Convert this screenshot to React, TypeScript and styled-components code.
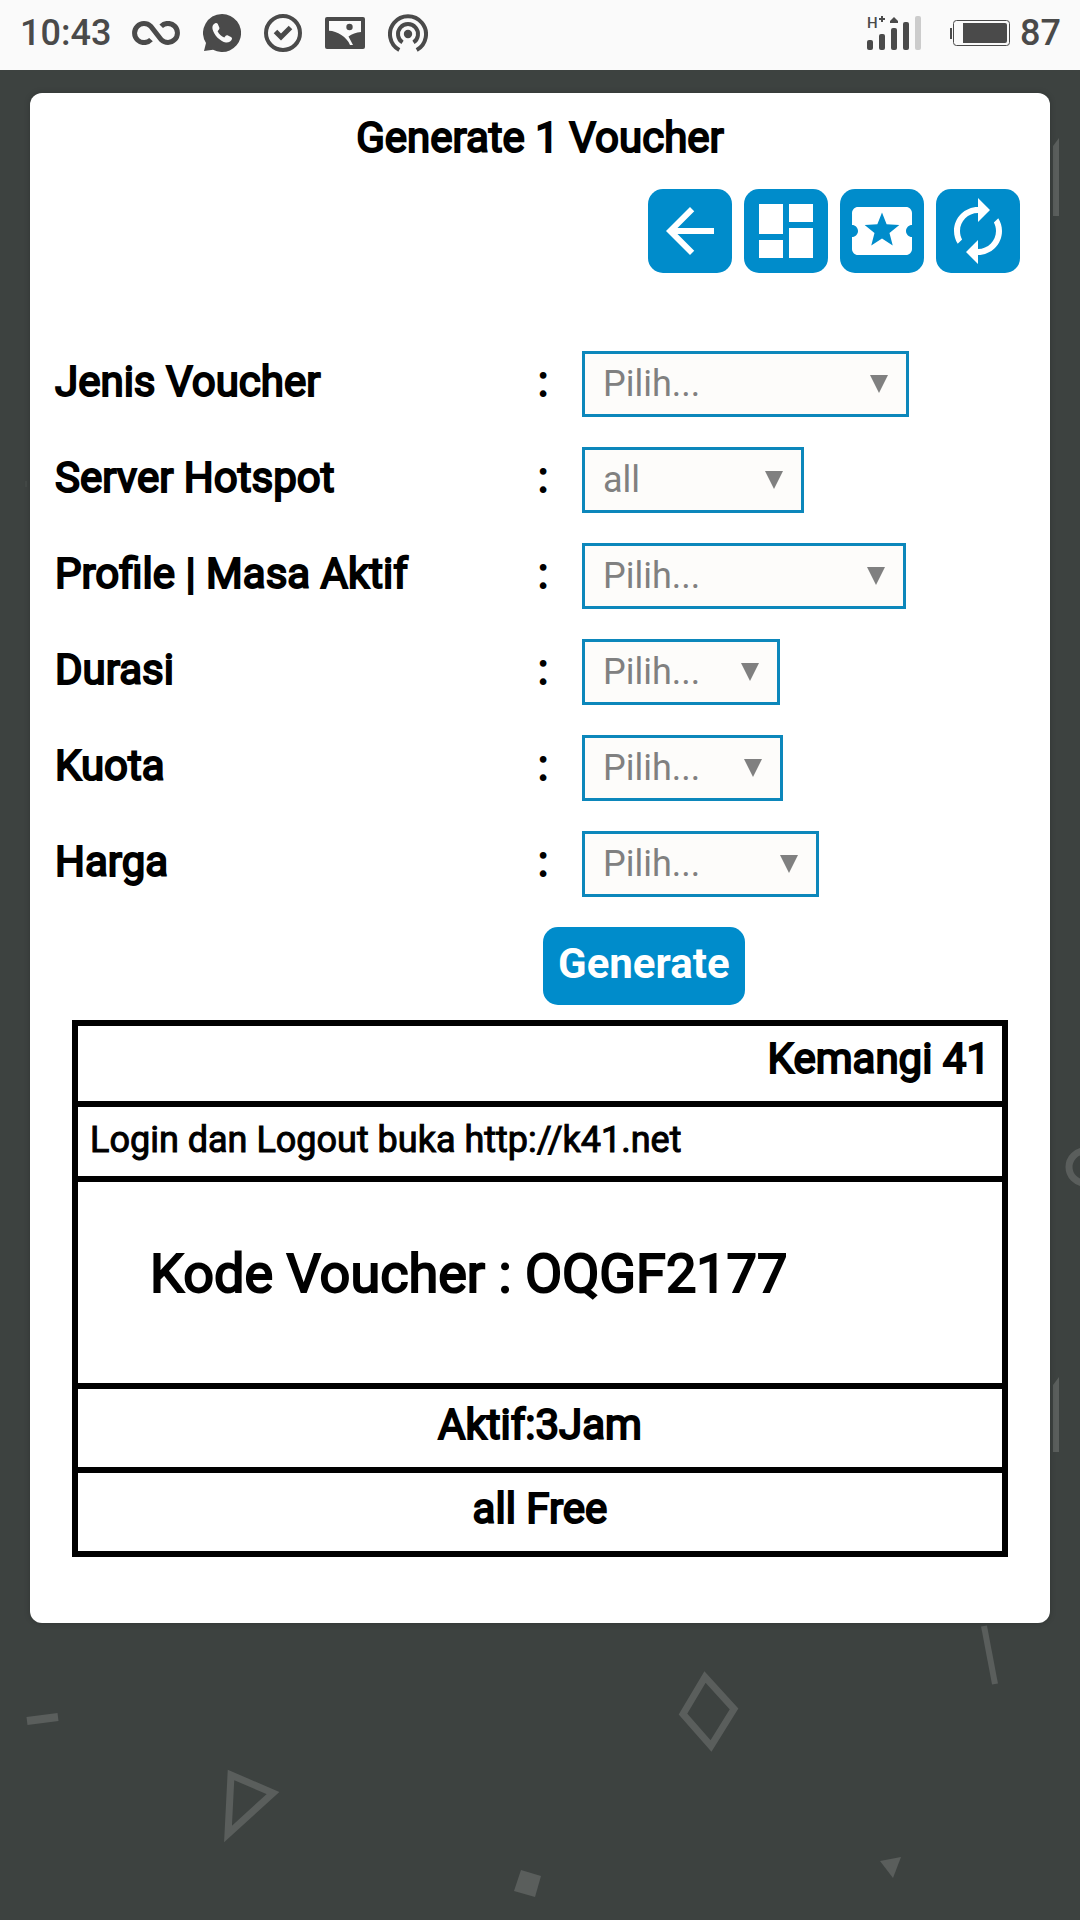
import React from "react";
import styled, { createGlobalStyle } from "styled-components";

const ink = "#4a4a4a";
const blue = "#008ccb";

const GlobalStyle = createGlobalStyle`
  *, *::before, *::after { box-sizing: border-box; }
  body {
    margin: 0;
    background: #3d4240;
    color: #000;
    font-family: Roboto, "Liberation Sans", sans-serif;
  }
`;

const Page = styled.div`
  position: relative;
  min-height: 100vh;
  overflow: hidden;
`;

const Backdrop = styled.svg`
  position: absolute;
  top: 0;
  left: 0;
  width: 1080px;
  height: 1920px;
`;

const StatusBar = styled.header`
  position: relative;
  display: flex;
  align-items: center;
  justify-content: space-between;
  height: 70px;
  padding: 0 19px 4px 20px;
  background: #fafafa;
  color: ${ink};
  font-size: 36px;
  font-weight: 500;
  line-height: 42px;
`;

const StatusGroup = styled.div<{ $gap: number }>`
  display: flex;
  align-items: center;
  gap: ${(p) => p.$gap}px;
`;

const Glyph = styled.svg`
  display: block;
  flex: none;
`;

const Card = styled.main`
  position: relative;
  margin: 23px 30px 0;
  padding: 21px 24px 66px;
  border-radius: 12px;
  background: #fff;
  box-shadow: 0 0 6px rgba(0, 0, 0, 0.2);
  font-size: 42px;
  line-height: 48px;
`;

const Title = styled.h1`
  margin: 0 0 27px;
  font-size: 42px;
  font-weight: 400;
  text-align: center;
  -webkit-text-stroke: 2px #000;
`;

const Toolbar = styled.nav`
  display: flex;
  justify-content: flex-end;
  gap: 12px;
  padding-right: 6px;
  margin-bottom: 63px;
`;

const ToolButton = styled.button`
  display: grid;
  place-items: center;
  width: 84px;
  height: 84px;
  padding: 0;
  border: 0;
  border-radius: 15px;
  background: ${blue};
  color: #fff;
  cursor: pointer;
`;

const Row = styled.div`
  display: grid;
  grid-template-columns: 483fr 45fr 444fr;
  align-items: baseline;
  padding: 15px 0;
`;

const Label = styled.label`
  padding-left: 1px;
  -webkit-text-stroke: 2px #000;
`;

const Colon = styled.span`
  padding-left: 1px;
  -webkit-text-stroke: 2px #000;
`;

const SelectBox = styled.div<{ $width: number }>`
  position: relative;
  width: ${(p) => p.$width}px;
  max-width: 100%;
`;

const Select = styled.select`
  display: block;
  appearance: none;
  width: 100%;
  height: 66px;
  padding: 0 48px 0 18px;
  border: 3px solid #0c87bb;
  border-radius: 0;
  background: #fdfcfa;
  color: #808080;
  font: 36px/42px Roboto, "Liberation Sans", sans-serif;
`;

const Caret = styled.svg`
  position: absolute;
  top: 24px;
  right: 21px;
  pointer-events: none;
`;

const Actions = styled.div`
  padding: 15px 0 15px calc(50% + 3px);
`;

const GenerateButton = styled.button`
  display: block;
  height: 78px;
  padding: 0 15px 4px;
  border: 0;
  border-radius: 15px;
  background: ${blue};
  color: #fff;
  font: bold 42px/48px Roboto, "Liberation Sans", sans-serif;
  cursor: pointer;
`;

const Voucher = styled.section`
  margin: 0 18px;
  border: 6px solid #000;
  border-bottom: 0;
`;

const VoucherLine = styled.p<{ $align?: string; $size?: number; $line?: number; $pad: string }>`
  margin: 0;
  padding: ${(p) => p.$pad};
  border-bottom: 6px solid #000;
  font-size: ${(p) => p.$size ?? 42}px;
  line-height: ${(p) => p.$line ?? 48}px;
  text-align: ${(p) => p.$align ?? "center"};
  -webkit-text-stroke: ${(p) => (p.$size === 36 ? 1 : 2)}px #000;
`;

const tools = [
  { name: "Kembali", d: "M20 11H7.83l5.59-5.59L12 4l-8 8 8 8 1.41-1.41L7.83 13H20v-2z" },
  { name: "Dashboard", d: "M3 13h8V3H3v10zm0 8h8v-6H3v6zm10 0h8V11h-8v10zm0-18v6h8V3h-8z" },
  {
    name: "Voucher",
    d: "M20 12c0-1.1.9-2 2-2V6c0-1.1-.9-2-2-2H4c-1.1 0-1.99.9-1.99 2v4c1.1 0 1.99.9 1.99 2s-.89 2-2 2v4c0 1.1.9 2 2 2h16c1.1 0 2-.9 2-2v-4c-1.1 0-2-.9-2-2zm-4.42 4.8L12 14.5l-3.58 2.3 1.08-4.12-3.29-2.69 4.24-.25L12 5.8l1.54 3.95 4.24.25-3.29 2.69 1.09 4.11z",
  },
  {
    name: "Muat ulang",
    d: "M12 6v3l4-4-4-4v3c-4.42 0-8 3.58-8 8 0 1.57.46 3.03 1.24 4.26L6.7 14.8c-.45-.83-.7-1.79-.7-2.8 0-3.31 2.69-6 6-6zm6.76 1.74L17.3 9.2c.44.84.7 1.79.7 2.8 0 3.31-2.69 6-6 6v-3l-4 4 4 4v-3c4.42 0 8-3.58 8-8 0-1.57-.46-3.03-1.24-4.26z",
  },
];

const fields = [
  { id: "jenis", label: "Jenis Voucher", value: "Pilih...", width: 327 },
  { id: "server", label: "Server Hotspot", value: "all", width: 222 },
  { id: "profile", label: "Profile | Masa Aktif", value: "Pilih...", width: 324 },
  { id: "durasi", label: "Durasi", value: "Pilih...", width: 198 },
  { id: "kuota", label: "Kuota", value: "Pilih...", width: 201 },
  { id: "harga", label: "Harga", value: "Pilih...", width: 237 },
];

function Shapes() {
  return (
    <Backdrop viewBox="0 0 1080 1920" fill="none" stroke="#5a5e5c" strokeWidth="7" aria-hidden="true">
      <path d="M1053 146L1059 138V216H1053Z" fill="#5a5e5c" stroke="none" />
      <path d="M1053 1385L1059 1377V1452H1053Z" fill="#5a5e5c" stroke="none" />
      <circle cx="1085" cy="1167" r="16" />
      <path d="M26 481V487" stroke="#4c504e" strokeWidth="1" />
      <path d="M27 1721L58 1717" strokeWidth="8" />
      <path d="M231 1775L273 1793L228 1834Z" />
      <path d="M521 1870L541 1876L535 1897L514 1891Z" fill="#5a5e5c" stroke="none" />
      <path d="M705 1677L734 1709L711 1746L683 1714Z" />
      <path d="M984 1626L995 1684" strokeWidth="6" />
      <path d="M880 1861L901 1857L893 1878Z" fill="#5a5e5c" stroke="none" />
    </Backdrop>
  );
}

function NotificationIcons() {
  return (
    <StatusGroup $gap={23}>
      <Glyph width="48" height="24" viewBox="0 0 48 24" fill="none" stroke={ink} strokeWidth="5">
        <path d="M19 18.6A9.5 9.5 0 1 1 18.7 5.3L29.3 18.7A9.5 9.5 0 1 0 29.2 5.2" />
      </Glyph>
      <Glyph width="38" height="38" viewBox="0 0 38 38">
        <path d="M19 0a19 19 0 1 1-9 35.7L1 37L3 29A19 19 0 0 1 19 0z" fill={ink} />
        <path
          d="M12.7 9C10 10 9 12 9.5 15C11 21 17 27.5 23 28.5C26 28.7 28.6 27 29 25C29 24 28.8 23.5 28 23L24.5 21.3C23.8 21 23.2 21.2 22.7 21.8L21.3 23.5C18.5 22.5 15.8 19.8 14.6 17.2L16 15.5C16.5 14.8 16.6 14.2 16.3 13.5L14.8 10C14.4 9 13.5 9 12.7 9z"
          fill="#fafafa"
        />
      </Glyph>
      <Glyph width="38" height="38" viewBox="0 0 38 38" fill="none" stroke={ink} strokeWidth="4">
        <circle cx="19" cy="19" r="17" />
        <path d="M11.5 17.5L17 23L26.5 13.5" strokeWidth="5" />
      </Glyph>
      <Glyph width="40" height="32" viewBox="0 0 40 32">
        <rect width="40" height="32" rx="2" fill={ink} />
        <path d="M4 4H36V15C31 15.5 27 17 23.5 19.5L28 28H25C22 20 12 14 4 13.8Z" fill="#fafafa" />
        <circle cx="24.5" cy="10" r="3.2" fill={ink} />
      </Glyph>
      <Glyph width="40" height="38" viewBox="0 0 40 38" fill="none" stroke={ink} strokeWidth="4">
        <path d="M11.3 36A18 18 0 1 1 28.7 36" />
        <path d="M14.5 28.4A10 10 0 1 1 25.5 28.4" />
        <circle cx="20" cy="20" r="4.2" fill={ink} stroke="none" />
      </Glyph>
    </StatusGroup>
  );
}

function SignalIcon() {
  return (
    <Glyph width="54" height="38" viewBox="0 -2 54 38" fill={ink}>
      <text x="0" y="12" fontSize="15">H</text>
      <path d="M12 2h2V0h2v2h2v2h-2v2h-2V4h-2z" />
      <path d="M23 7V5L27 1L31 5V7z" />
      <rect x="0" y="24" width="6" height="10" rx="2" />
      <rect x="12" y="18" width="6" height="16" rx="2" />
      <rect x="24" y="12" width="6" height="22" rx="2" />
      <rect x="36" y="6" width="6" height="28" rx="2" />
      <rect x="48" y="0" width="6" height="34" rx="2" fill="#cccccc" />
    </Glyph>
  );
}

function BatteryIcon() {
  return (
    <Glyph width="60" height="26" viewBox="0 0 60 26" fill={ink}>
      <rect x="0" y="8" width="2" height="11" />
      <rect x="3.5" y="0.5" width="56" height="25" rx="3" fill="none" stroke={ink} />
      <path d="M13 3H55a2 2 0 0 1 2 2V21a2 2 0 0 1-2 2H13z" />
    </Glyph>
  );
}

export default function App() {
  return (
    <Page>
      <GlobalStyle />
      <Shapes />
      <StatusBar>
        <StatusGroup $gap={21}>
          <time>10:43</time>
          <NotificationIcons />
        </StatusGroup>
        <StatusGroup $gap={29}>
          <SignalIcon />
          <StatusGroup $gap={10}>
            <BatteryIcon />
            <span>87</span>
          </StatusGroup>
        </StatusGroup>
      </StatusBar>
      <Card>
        <Title>Generate 1 Voucher</Title>
        <Toolbar>
          {tools.map((tool) => (
            <ToolButton key={tool.name} type="button" aria-label={tool.name}>
              <Glyph width="72" height="72" viewBox="0 0 24 24" fill="currentColor">
                <path d={tool.d} />
              </Glyph>
            </ToolButton>
          ))}
        </Toolbar>
        <form onSubmit={(e) => e.preventDefault()}>
          {fields.map((field) => (
            <Row key={field.id}>
              <Label htmlFor={field.id}>{field.label}</Label>
              <Colon>:</Colon>
              <SelectBox $width={field.width}>
                <Select id={field.id}>
                  <option>{field.value}</option>
                </Select>
                <Caret width="18" height="18" viewBox="0 0 18 18" fill="#808080">
                  <path d="M0 0H18L9 18z" />
                </Caret>
              </SelectBox>
            </Row>
          ))}
          <Actions>
            <GenerateButton type="submit">Generate</GenerateButton>
          </Actions>
        </form>
        <Voucher>
          <VoucherLine $align="right" $pad="9px 12px 18px">Kemangi 41</VoucherLine>
          <VoucherLine $align="left" $size={36} $line={42} $pad="12px 12px 15px">
            Login dan Logout buka http://k41.net
          </VoucherLine>
          <VoucherLine $align="left" $size={54} $line={63} $pad="60px 12px 78px 72px">
            Kode Voucher : OQGF2177
          </VoucherLine>
          <VoucherLine $pad="12px 12px 18px">Aktif:3Jam</VoucherLine>
          <VoucherLine $pad="12px 12px 18px">all Free</VoucherLine>
        </Voucher>
      </Card>
    </Page>
  );
}
